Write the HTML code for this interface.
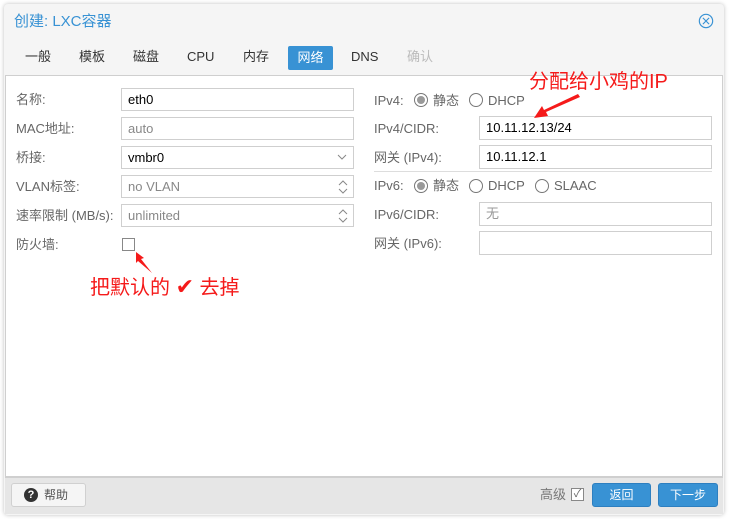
<!DOCTYPE html>
<html><head><meta charset="utf-8"><style>
*{box-sizing:border-box;margin:0;padding:0}
body{width:729px;height:519px;background:#fff;font-family:"Liberation Sans","Noto Sans CJK SC",sans-serif;font-size:13px;color:#333;position:relative;overflow:hidden;line-height:16px}
.win{position:absolute;left:4px;top:4px;width:720px;height:511px;background:#f5f5f5;border-radius:4px;box-shadow:0 0 4px rgba(0,0,0,.25)}
.a{position:absolute;white-space:nowrap;line-height:16px;height:16px}
.panel{position:absolute;left:5px;top:75px;width:718px;height:402px;background:#fff;border:1px solid #cfcfcf}
.foot{position:absolute;left:5px;top:477px;width:718px;height:37px;background:#e6e6e6;border-top:1px solid #cfcfcf}
.lbl{color:#666}
.inp{position:absolute;height:23px;border:1px solid #cfcfcf;background:#fff;padding:0 6px;line-height:21px;color:#000;font-size:13px}
.tab{position:absolute;top:49px;color:#333;line-height:16px;height:16px}
.radio{position:absolute;width:14px;height:14px;border:1px solid #777;border-radius:50%;background:#fff}
.radio.on::after{content:"";position:absolute;left:2px;top:2px;width:8px;height:8px;border-radius:50%;background:#999}
.btn{position:absolute;top:483px;height:24px;border-radius:3px;background:#3892d4;border:1px solid #2d7fc0;color:#fff;text-align:center;line-height:22px;font-size:12px}
.red{color:#f51a1a;font-size:20px;position:absolute;white-space:nowrap;line-height:24px}
</style></head><body>
<div class="win"></div>
<div class="a" style="left:14px;top:13px;font-size:15px;line-height:18px;height:18px;color:#3892d4">创建: LXC容器</div>
<svg class="a" style="left:697px;top:13px" width="18" height="18" viewBox="0 0 18 18"><circle cx="9" cy="9" r="7.5" fill="none" stroke="#3892d4" stroke-width="1.3"/><path d="M5.5 5.5L12.5 12.5M12.5 5.5L5.5 12.5" stroke="#3892d4" stroke-width="1.3"/></svg>
<div class="tab" style="left:25px">一般</div>
<div class="tab" style="left:79px">模板</div>
<div class="tab" style="left:133px">磁盘</div>
<div class="tab" style="left:187px">CPU</div>
<div class="tab" style="left:243px">内存</div>
<div class="a" style="left:288px;top:46px;width:45px;height:24px;background:#3892d4;border-radius:2px;color:#fff;text-align:center;line-height:24px">网络</div>
<div class="tab" style="left:351px">DNS</div>
<div class="tab" style="left:407px;color:#bbb">确认</div>
<div class="panel"></div>

<div class="a lbl" style="left:16px;top:92px">名称:</div>
<div class="inp" style="left:121px;top:88px;width:233px">eth0</div>
<div class="a lbl" style="left:16px;top:121px">MAC地址:</div>
<div class="inp" style="left:121px;top:117px;width:233px;color:#888">auto</div>
<div class="a lbl" style="left:16px;top:150px">桥接:</div>
<div class="inp" style="left:121px;top:146px;width:233px">vmbr0<svg style="position:absolute;right:6px;top:7px" width="10" height="7"><path d="M1 1L5 5L9 1" fill="none" stroke="#888"/></svg></div>
<div class="a lbl" style="left:16px;top:179px">VLAN标签:</div>
<div class="inp" style="left:121px;top:175px;width:233px;color:#888">no VLAN<svg style="position:absolute;right:5px;top:3px" width="10" height="16"><path d="M1 6L5 2L9 6M1 10L5 14L9 10" fill="none" stroke="#888"/></svg></div>
<div class="a lbl" style="left:16px;top:208px">速率限制 (MB/s):</div>
<div class="inp" style="left:121px;top:204px;width:233px;color:#888">unlimited<svg style="position:absolute;right:5px;top:3px" width="10" height="16"><path d="M1 6L5 2L9 6M1 10L5 14L9 10" fill="none" stroke="#888"/></svg></div>
<div class="a lbl" style="left:16px;top:237px">防火墙:</div>
<div class="a" style="left:122px;top:238px;width:13px;height:13px;border:1px solid #888;background:#fff"></div>
<svg class="a" style="left:130px;top:250px;height:25px" width="25" height="25"><path d="M6 2L14 8L11 9L22 23L8 11L6 13Z" fill="#f51a1a"/></svg>
<div class="red" style="left:90px;top:275px">把默认的 <span style="font-size:22px">✔</span> 去掉</div>

<div class="a lbl" style="left:374px;top:93px">IPv4:</div>
<div class="radio on" style="left:414px;top:93px"></div>
<div class="a lbl" style="left:433px;top:93px">静态</div>
<div class="radio" style="left:469px;top:93px"></div>
<div class="a lbl" style="left:488px;top:93px">DHCP</div>
<div class="a lbl" style="left:374px;top:121px">IPv4/CIDR:</div>
<div class="inp" style="left:479px;top:116px;width:233px;height:24px;line-height:22px">10.11.12.13/24</div>
<div class="a lbl" style="left:374px;top:150px">网关 (IPv4):</div>
<div class="inp" style="left:479px;top:145px;width:233px;height:24px;line-height:22px">10.11.12.1</div>
<div class="a" style="left:374px;top:171px;width:338px;height:1px;background:#ddd"></div>
<div class="a lbl" style="left:374px;top:178px">IPv6:</div>
<div class="radio on" style="left:414px;top:179px"></div>
<div class="a lbl" style="left:433px;top:178px">静态</div>
<div class="radio" style="left:469px;top:179px"></div>
<div class="a lbl" style="left:488px;top:178px">DHCP</div>
<div class="radio" style="left:535px;top:179px"></div>
<div class="a lbl" style="left:554px;top:178px">SLAAC</div>
<div class="a lbl" style="left:374px;top:207px">IPv6/CIDR:</div>
<div class="inp" style="left:479px;top:202px;width:233px;height:24px;line-height:22px;color:#999">无</div>
<div class="a lbl" style="left:374px;top:236px">网关 (IPv6):</div>
<div class="inp" style="left:479px;top:231px;width:233px;height:24px"></div>
<div class="red" style="left:529px;top:70px">分配给小鸡的IP</div>
<svg class="a" style="left:530px;top:92px;height:30px" width="52" height="30"><path d="M48 2L50 5L16 20L18 24L4 26L12 14L14 18Z" fill="#f51a1a"/></svg>

<div class="foot"></div>
<div class="a" style="left:11px;top:483px;width:75px;height:24px;background:#f5f5f5;border:1px solid #d0d0d0;border-radius:3px"></div>
<div class="a" style="left:24px;top:488px;width:14px;height:14px;border-radius:50%;background:#333;color:#fff;font-size:11px;font-weight:bold;text-align:center;line-height:14px">?</div>
<div class="a" style="left:44px;top:487px;font-size:12px;color:#555">帮助</div>
<div class="a" style="left:540px;top:487px;color:#777">高级</div>
<div class="a" style="left:571px;top:488px;width:13px;height:13px;border:1px solid #888;background:#fff;font-size:11px;line-height:11px;text-align:center;color:#666">✓</div>
<div class="btn" style="left:592px;width:59px">返回</div>
<div class="btn" style="left:658px;width:60px">下一步</div>
</body></html>
